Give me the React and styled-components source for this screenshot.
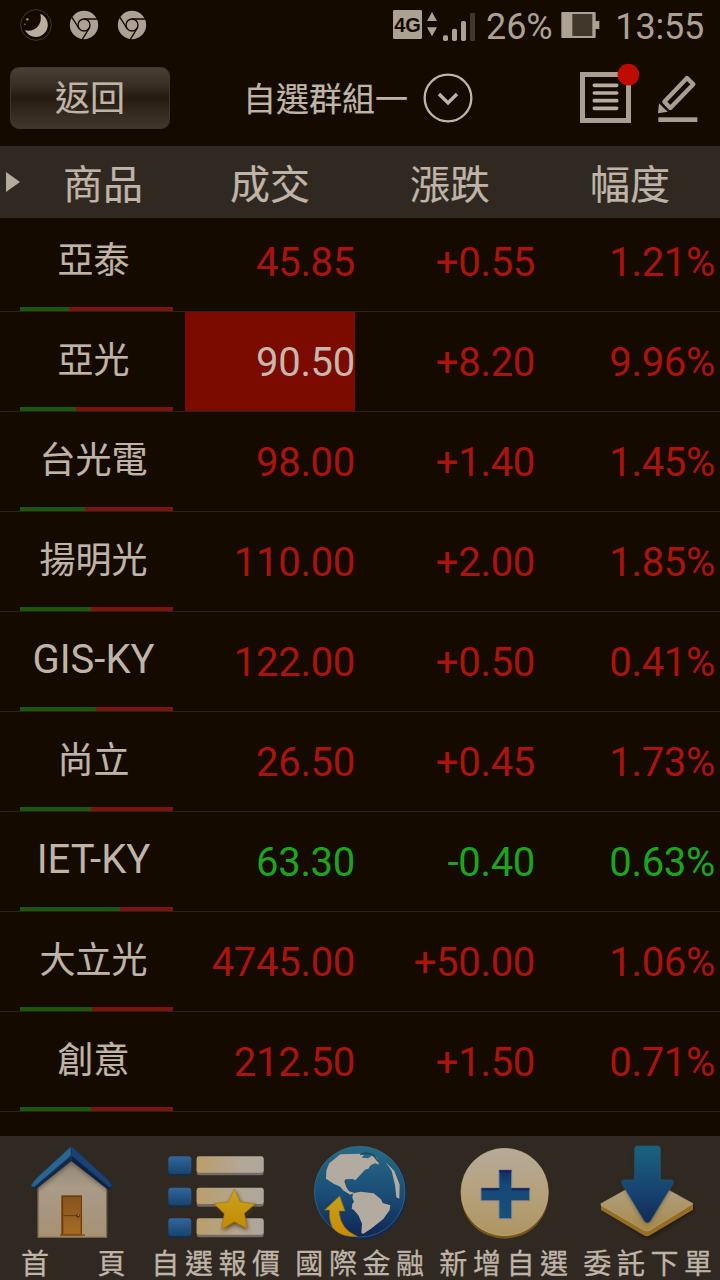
import React from "react";
import styled, { createGlobalStyle } from "styled-components";

const colors = {
  page: "#140a00",
  bar: "#302922",
  text: "#bfb4a7",
  status: "#ada193",
  up: "#ab140a",
  down: "#1ca51a",
  limitUp: "#7b0a01",
};

const GlobalStyle = createGlobalStyle`
  body {
    margin: 0;
    background: ${colors.page};
    color: ${colors.text};
    font-family: Roboto, "Noto Sans CJK TC", sans-serif;
  }
`;

const Screen = styled.div`
  display: flex;
  flex-direction: column;
  width: 720px;
  height: 1280px;
  overflow: hidden;
  background: ${colors.page};
`;

const StatusBar = styled.div`
  display: flex;
  align-items: center;
  justify-content: space-between;
  box-sizing: border-box;
  height: 50px;
  padding: 0 16px 0 20px;
  color: ${colors.status};
`;

const StatusGroup = styled.div`
  display: flex;
  align-items: center;
  height: 50px;
`;

const StatusText = styled.span`
  font-size: 36px;
  line-height: 50px;
  padding-top: 4px;
  letter-spacing: -0.2px;
  margin: 0 ${(props) => props.$right || 0}px 0 ${(props) => props.$left}px;
`;

const Drawing = styled.svg`
  display: block;
  flex: none;
  width: ${(props) => props.$w}px;
  height: ${(props) => props.$h}px;
`;

const Toolbar = styled.div`
  display: flex;
  align-items: center;
  box-sizing: border-box;
  height: 96px;
  padding: 0 21px 0 10px;
`;

const BackButton = styled.button`
  width: 160px;
  height: 62px;
  padding: 4px 0 0;
  border: 1px solid #3d342a;
  border-radius: 9px;
  background: linear-gradient(#4a4035, #382e24 28%, #261a10 50%, #32281e 72%, #41372c);
  color: ${colors.text};
  font: 35px/56px Roboto, "Noto Sans CJK TC", sans-serif;
  -webkit-text-stroke: 0.2px;
`;

const GroupPicker = styled.div`
  display: flex;
  align-items: center;
  gap: 14px;
  margin-left: 73px;
`;

const GroupName = styled.span`
  font-size: 33px;
  line-height: 48px;
  padding-top: 4px;
  -webkit-text-stroke: 0.2px;
`;

const Tools = styled.div`
  display: flex;
  margin-left: auto;
  padding-bottom: 10px;
`;

const HeaderRow = styled.div`
  display: grid;
  grid-template-columns: repeat(4, 180px);
  height: 72px;
  background: ${colors.bar};
`;

const HeaderCell = styled.div`
  display: flex;
  align-items: center;
  justify-content: center;
  height: 72px;
  font-size: 40px;
  -webkit-text-stroke: 0.2px;
`;

const HeaderText = styled.span`
  line-height: 64px;
  padding-top: 8px;
`;

const ProductHeader = styled(HeaderCell)`
  justify-content: flex-start;
  gap: 43px;
  padding-left: 6px;
`;

const QuoteList = styled.div`
  flex: 1;
  overflow: hidden;
  margin-top: -6px;
`;

const Row = styled.div`
  display: grid;
  grid-template-columns: repeat(4, 180px);
  box-sizing: border-box;
  height: 100px;
  border-bottom: 1px solid #2b231a;
`;

const NameCell = styled.div`
  display: flex;
  flex-direction: column;
  justify-content: space-between;
  width: 153px;
  height: 99px;
  margin-left: 20px;
`;

const Name = styled.div`
  text-align: center;
  white-space: nowrap;
  font-size: ${(props) => (props.$latin ? 40 : 36)}px;
  line-height: 94px;
  padding-top: ${(props) => (props.$latin ? 1 : 2)}px;
  height: 92px;
  margin: 0 -3px 0 -9px;
  -webkit-text-stroke: ${(props) => (props.$latin ? 0 : 0.2)}px;
`;

const RatioBar = styled.div`
  height: 4px;
  background: #7b140c;
`;

const RatioFill = styled.div`
  height: 4px;
  background: #1c580c;
`;

const Value = styled.div`
  margin: 0 5px;
  text-align: right;
  font-size: 40px;
  line-height: 102px;
  height: 99px;
  letter-spacing: -0.3px;
  color: ${(props) => (props.$down ? colors.down : colors.up)};
`;

const Price = styled(Value)`
  ${(props) =>
    props.$limit && `background: ${colors.limitUp}; color: #c4b9ac;`}
`;

const NavBar = styled.nav`
  display: grid;
  grid-template-columns: repeat(5, 144px);
  height: 144px;
  background: ${colors.bar};
`;

const NavItem = styled.div`
  display: flex;
  flex-direction: column;
  align-items: center;
`;

const NavLabel = styled.span`
  height: 34px;
  font-size: 28px;
  line-height: 38px;
  letter-spacing: 5.6px;
  word-spacing: ${(props) => props.$wordGap || 0}px;
  white-space: nowrap;
  margin-right: ${(props) => (props.$wordGap ? -8 : -5)}px;
  -webkit-text-stroke: 0.3px;
`;

const quotes = [
  { name: "亞泰", price: "45.85", change: "+0.55", percent: "1.21%", sold: 49 },
  { name: "亞光", price: "90.50", change: "+8.20", percent: "9.96%", sold: 56, limit: true },
  { name: "台光電", price: "98.00", change: "+1.40", percent: "1.45%", sold: 65 },
  { name: "揚明光", price: "110.00", change: "+2.00", percent: "1.85%", sold: 71 },
  { name: "GIS-KY", price: "122.00", change: "+0.50", percent: "0.41%", sold: 76, latin: true },
  { name: "尚立", price: "26.50", change: "+0.45", percent: "1.73%", sold: 71 },
  { name: "IET-KY", price: "63.30", change: "-0.40", percent: "0.63%", sold: 100, latin: true, down: true },
  { name: "大立光", price: "4745.00", change: "+50.00", percent: "1.06%", sold: 72 },
  { name: "創意", price: "212.50", change: "+1.50", percent: "0.71%", sold: 71 },
];

function NotificationIcons() {
  return (
    <Drawing $w={130} $h={50} viewBox="60 0 390 150">
      <circle cx="108" cy="75" r="46" fill="none" stroke="#41362a" strokeWidth="3" />
      <path d="M121 41C143 51 150 76 137 95C120 118 88 115 75 91C104 97 129 75 121 41Z" fill="#b8ad9f" />
      <circle cx="82" cy="58" r="4" fill="#887c6e" />
      <circle cx="75" cy="73" r="2.5" fill="#887c6e" />
      {[252, 396].map((x) => (
        <g key={x} transform={`translate(${x} 75)`}>
          <circle r="42.5" fill={colors.status} />
          <g fill="none" stroke={colors.page} strokeWidth="4.2">
            <circle r="18" />
            <path d="M0-18H40M-16 9L-36-23M16 9L-5 43" />
          </g>
        </g>
      ))}
    </Drawing>
  );
}

function SignalIcons() {
  return (
    <Drawing $w={86} $h={50} viewBox="36 0 258 150">
      <rect x="39" y="30" width="87" height="87" rx="4" fill={colors.status} />
      <text
        x="82.5"
        y="96"
        textAnchor="middle"
        textLength="80"
        lengthAdjust="spacingAndGlyphs"
        fontFamily="Liberation Sans"
        fontSize="59"
        fontWeight="700"
        fill={colors.page}
      >
        4G
      </text>
      <g fill={colors.status}>
        <path d="M156 36L171 63H141ZM156 109L171 82H141Z" />
        <rect x="189" y="106" width="15" height="17" rx="5" />
        <rect x="216" y="86" width="15" height="37" rx="5" />
        <rect x="243" y="63" width="15" height="60" rx="5" />
      </g>
      <rect x="270" y="39" width="15" height="84" rx="3" fill="#41372b" />
    </Drawing>
  );
}

function BatteryIcon() {
  return (
    <Drawing $w={39} $h={50} viewBox="542 0 117 150">
      <path d="M545 36H643Q646 36 646 39V63H657V87H646V111Q646 114 643 114H545Q543 114 543 111V39Q543 36 545 36Z" fill={colors.status} />
      <rect x="576" y="42" width="60" height="66" fill="#41372b" />
    </Drawing>
  );
}

function ChevronCircle() {
  return (
    <Drawing $w={52} $h={52} viewBox="576 36 156 156" fill="none" stroke={colors.text}>
      <circle cx="654" cy="114" r="70" strokeWidth="7" />
      <path d="M627 102L654 129L681 102" strokeWidth="10" />
    </Drawing>
  );
}

function ToolIcons() {
  return (
    <Drawing $w={121} $h={64} viewBox="54 18 363 192">
      <rect x="67.5" y="58.5" width="138" height="138" fill="none" stroke="#a99e91" strokeWidth="15" />
      <path d="M103 91H170M103 114H170M103 137H170M103 160H170" stroke="#b8ada0" strokeWidth="11" strokeLinecap="round" />
      <circle cx="205" cy="59" r="32.5" fill="#bf0c00" />
      <path d="M313 140L381 69L400 88L331 159Z" fill="none" stroke="#a99e91" strokeWidth="13" strokeLinejoin="round" />
      <path d="M297 145L323 170L294 175Z" fill="#a99e91" />
      <rect x="295" y="187" width="117" height="14" fill="#a99e91" />
    </Drawing>
  );
}

function HomeIcon() {
  return (
    <Drawing $w={144} $h={110} viewBox="0 18 432 330">
      <defs>
        <linearGradient id="wall" x2="0" y2="1">
          <stop offset="0" stopColor="#8f8271" />
          <stop offset=".4" stopColor="#a99b88" />
          <stop offset="1" stopColor="#a69172" />
        </linearGradient>
        <linearGradient id="door" x2="0" y2="1">
          <stop offset="0" stopColor="#885420" />
          <stop offset="1" stopColor="#a56c25" />
        </linearGradient>
        <filter id="soft">
          <feGaussianBlur stdDeviation="7" />
        </filter>
        <clipPath id="wallClip">
          <path d="M114 322V160L214 75L320 160V322Z" />
        </clipPath>
      </defs>
      <path d="M114 322V160L214 75L320 160V322Z" fill="url(#wall)" stroke="#76664e" strokeWidth="4" />
      <g clipPath="url(#wallClip)">
        <path d="M100 180L214 88L334 180" fill="none" stroke="#4d4031" strokeWidth="16" opacity=".7" filter="url(#soft)" />
      </g>
      <path d="M92 170L214 73V93L105 180Z" fill="#112a48" />
      <path d="M338 170L214 73V93L325 180Z" fill="#0d2142" />
      <path d="M93 168Q103 150 116 139L214 49V76L102 171Z" fill="#2d6592" stroke="#1c4a70" strokeWidth="3" />
      <path d="M337 168Q326 150 312 139L214 49V76L328 171Z" fill="#1c4273" stroke="#173765" strokeWidth="3" />
      <rect x="184" y="196" width="62" height="120" fill="#6d3c0c" />
      <rect x="190" y="203" width="52" height="109" fill="url(#door)" stroke="#8d581c" strokeWidth="2" />
      <path d="M190 257H241" stroke="#633a11" strokeWidth="3" />
      <circle cx="234" cy="257" r="6" fill="#55331a" />
      <circle cx="235" cy="255" r="2.5" fill="#b6a283" />
      <path d="M180 313H255V318H180Z" fill="#875517" />
    </Drawing>
  );
}

function WatchListIcon() {
  return (
    <Drawing $w={144} $h={110} viewBox="-3 18 432 330">
      <defs>
        <linearGradient id="blueTile" x2="0" y2="1">
          <stop offset="0" stopColor="#32669c" />
          <stop offset="1" stopColor="#18436d" />
        </linearGradient>
        <linearGradient id="line">
          <stop offset="0" stopColor="#ba9e6b" />
          <stop offset=".7" stopColor="#b3a797" />
          <stop offset="1" stopColor="#b0a59a" />
        </linearGradient>
        <linearGradient id="star" x2="0" y2="1">
          <stop offset="0" stopColor="#c9a31d" />
          <stop offset="1" stopColor="#c48a03" />
        </linearGradient>
      </defs>
      {[79, 173, 265].map((y) => (
        <g key={y}>
          <rect x="70" y={y + 6} width="69" height="53" rx="9" fill="#142e49" />
          <rect x="70" y={y} width="69" height="53" rx="9" fill="url(#blueTile)" />
          <rect x="155" y={y + 4} width="201" height="53" rx="7" fill="#746b62" />
          <rect x="155" y={y} width="201" height="49" rx="7" fill="url(#line)" />
        </g>
      ))}
      <path d="M268 178L286 216L331 222L298 251L306 297L268 279L230 299L238 253L207 223L250 216Z" fill="#4a3517" opacity=".8" filter="url(#soft)" transform="translate(3 5)" />
      <path d="M268 177L286 216L331 221L298 250L306 295L268 275L230 297L238 251L207 221L250 216Z" fill="url(#star)" stroke="#a97909" strokeWidth="2" strokeLinejoin="round" />
    </Drawing>
  );
}

function GlobeIcon() {
  return (
    <Drawing $w={144} $h={110} viewBox="-6 18 432 330">
      <defs>
        <linearGradient id="ocean" x2="0" y2="1">
          <stop offset="0" stopColor="#286985" />
          <stop offset=".5" stopColor="#1b4f78" />
          <stop offset="1" stopColor="#102655" />
        </linearGradient>
        <linearGradient id="arrow" x2="0" y2="1">
          <stop offset="0" stopColor="#c4a11c" />
          <stop offset="1" stopColor="#cc8a03" />
        </linearGradient>
      </defs>
      <circle cx="213" cy="191" r="138" fill="#162a50" />
      <circle cx="209" cy="185" r="136" fill="url(#ocean)" stroke="#3a7187" strokeWidth="2" />
      <g fill="#b4aba0">
        <path d="M118 100L137 84L151 73L211 71L222 75L215 83L235 85L245 77L261 84L267 104L255 100L242 106L235 116L225 119L196 151L188 147L166 148L163 154L169 172L177 184L192 188L181 194L159 181L151 170L131 161L108 146L109 121Z" />
        <path d="M189 190L211 185L251 190L273 208L278 219L301 226L299 240L280 267L243 296L219 312L214 308L216 281L206 257L191 239L185 237L187 222L192 215L187 203Z" />
        <path d="M287 97L313 123L329 164L328 206L319 202L315 165L305 123Z" />
      </g>
      <path d="M211 74L226 69L248 73L264 94" fill="none" stroke="#1d465b" strokeWidth="4" />
      <path d="M149 198L165 243L147 243Q151 299 202 319Q161 323 135 301Q116 284 119 240H104Z" fill="url(#arrow)" stroke="#9d6d0d" strokeWidth="2" />
    </Drawing>
  );
}

function AddIcon() {
  return (
    <Drawing $w={144} $h={110} viewBox="-9 18 432 330">
      <defs>
        <linearGradient id="coin" x2="0" y2="1">
          <stop offset="0" stopColor="#b6aa9c" />
          <stop offset=".5" stopColor="#b5a17b" />
          <stop offset="1" stopColor="#ae9563" />
        </linearGradient>
        <linearGradient id="plus" x2="0" y2="1">
          <stop offset="0" stopColor="#132d64" />
          <stop offset=".3" stopColor="#164776" />
          <stop offset="1" stopColor="#165078" />
        </linearGradient>
      </defs>
      <circle cx="209" cy="195" r="131" fill="#785519" />
      <circle cx="209" cy="186" r="131" fill="url(#coin)" stroke="#c0ad83" strokeWidth="2" />
      <path d="M192 120H230V174H284V212H230V266H192V212H138V174H192Z" fill="url(#plus)" stroke="#7c8192" strokeWidth="3" />
      <path d="M193 124H229M140 178H192M230 178H283" stroke="#15205f" strokeWidth="6" />
    </Drawing>
  );
}

function OrderIcon() {
  return (
    <Drawing $w={144} $h={110} viewBox="3 18 432 330">
      <defs>
        <linearGradient id="plate" x2="0" y2="1">
          <stop offset="0" stopColor="#b2a58f" />
          <stop offset="1" stopColor="#a78948" />
        </linearGradient>
        <linearGradient id="down" x2="0" y2="1">
          <stop offset="0" stopColor="#1a637d" />
          <stop offset=".6" stopColor="#174270" />
          <stop offset="1" stopColor="#132a55" />
        </linearGradient>
      </defs>
      <path d="M82 235L215 168L360 235L220 325Z" fill="#15100b" opacity=".8" filter="url(#soft)" />
      <path d="M78 222L354 222V239L225 316Q216 322 206 316L78 240Z" fill="#956d24" />
      <path d="M78 221L205 150Q215 145 226 150L354 221L225 300Q216 306 206 300L78 226Z" fill="url(#plate)" stroke="#b8a474" strokeWidth="2" />
      <path d="M186 48H248Q256 48 256 57V150H287Q299 151 293 162L226 274Q217 285 208 274L142 162Q136 151 149 150H179V57Q179 48 186 48Z" fill="#352d20" opacity=".7" filter="url(#soft)" />
      <path d="M186 48H248Q256 48 256 57V150H287Q299 151 293 162L226 273Q217 284 208 273L142 162Q136 151 149 150H179V57Q179 48 186 48Z" fill="url(#down)" stroke="#205a78" strokeWidth="2" />
    </Drawing>
  );
}

const navItems = [
  { label: "首 頁", icon: HomeIcon, wordGap: 30.5 },
  { label: "自選報價", icon: WatchListIcon },
  { label: "國際金融", icon: GlobeIcon },
  { label: "新增自選", icon: AddIcon },
  { label: "委託下單", icon: OrderIcon },
];

function QuoteRow({ quote }) {
  return (
    <Row>
      <NameCell>
        <Name $latin={quote.latin}>{quote.name}</Name>
        <RatioBar>
          <RatioFill style={{ width: quote.sold }} />
        </RatioBar>
      </NameCell>
      <Price $down={quote.down} $limit={quote.limit}>
        {quote.price}
      </Price>
      <Value $down={quote.down}>{quote.change}</Value>
      <Value $down={quote.down}>{quote.percent}</Value>
    </Row>
  );
}

function App() {
  return (
    <Screen>
      <GlobalStyle />
      <StatusBar>
        <NotificationIcons />
        <StatusGroup>
          <SignalIcons />
          <StatusText $left={8} $right={9}>
            26%
          </StatusText>
          <BatteryIcon />
          <StatusText $left={15}>13:55</StatusText>
        </StatusGroup>
      </StatusBar>
      <Toolbar>
        <BackButton>返回</BackButton>
        <GroupPicker>
          <GroupName>自選群組一</GroupName>
          <ChevronCircle />
        </GroupPicker>
        <Tools>
          <ToolIcons />
        </Tools>
      </Toolbar>
      <HeaderRow>
        <ProductHeader>
          <Drawing $w={14} $h={20} viewBox="0 0 14 20">
            <path d="M0 0L14 10L0 20Z" fill="#b5aa9c" />
          </Drawing>
          <HeaderText>商品</HeaderText>
        </ProductHeader>
        <HeaderCell>
          <HeaderText>成交</HeaderText>
        </HeaderCell>
        <HeaderCell>
          <HeaderText>漲跌</HeaderText>
        </HeaderCell>
        <HeaderCell>
          <HeaderText>幅度</HeaderText>
        </HeaderCell>
      </HeaderRow>
      <QuoteList>
        {quotes.map((quote) => (
          <QuoteRow key={quote.name} quote={quote} />
        ))}
      </QuoteList>
      <NavBar>
        {navItems.map(({ label, icon: Icon, wordGap }) => (
          <NavItem key={label}>
            <Icon />
            <NavLabel $wordGap={wordGap}>{label}</NavLabel>
          </NavItem>
        ))}
      </NavBar>
    </Screen>
  );
}

export default App;
